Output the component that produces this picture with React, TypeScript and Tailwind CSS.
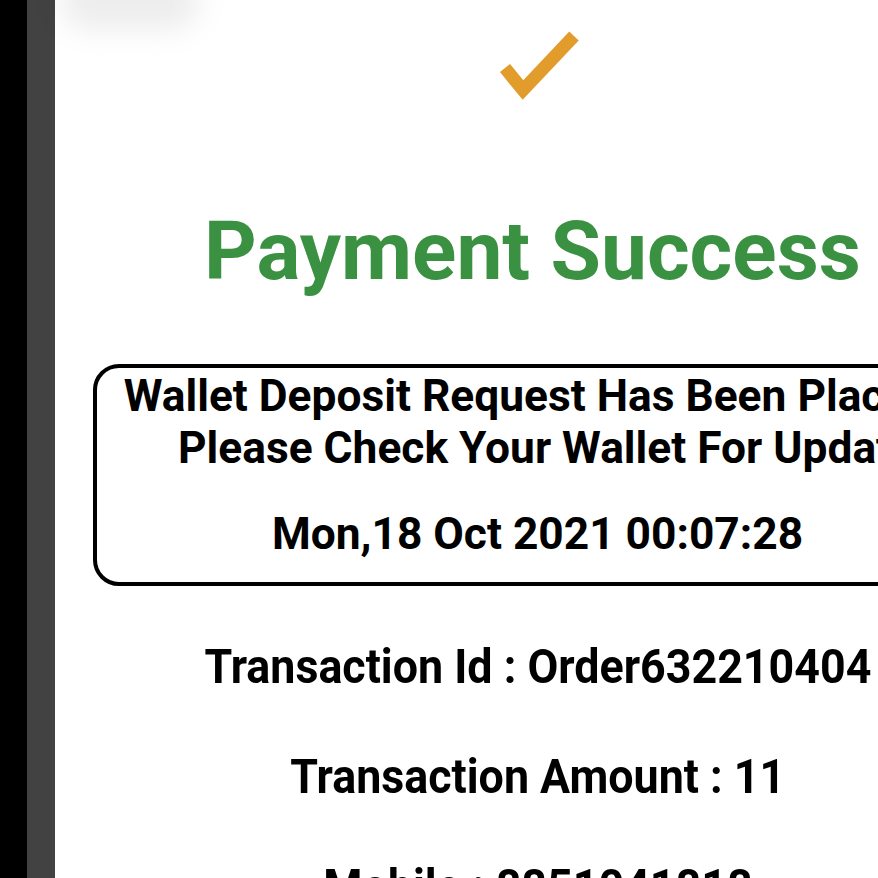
export default function App() {
  return (
    <div className="flex w-[878px] h-[878px] overflow-hidden bg-white" style={{ fontFamily: 'Roboto, "Liberation Sans", sans-serif' }}>
      <div className="w-[27px] shrink-0 bg-black" />
      <div className="w-[28px] shrink-0 bg-[#424242]" />
      <div className="relative w-[965px] shrink-0 flex flex-col items-center">
        <div className="absolute -top-[30px] left-[5px] w-[140px] h-[60px] rounded-full bg-black/[0.07] blur-[14px]" />
        <svg className="mt-[30px] shrink-0" width="90" height="80" viewBox="0 0 90 80">
          <polyline points="12,38 30,60 81,6" fill="none" stroke="#E29C2B" strokeWidth="13" />
        </svg>
        <h1 className="mt-[100px] shrink-0 text-[82px] leading-none font-bold text-[#3A9142] whitespace-nowrap -translate-x-[5px]">Payment Success</h1>
        <div className="mt-[72px] shrink-0 w-[890px] h-[222px] border-4 border-black rounded-[26px] flex flex-col items-center pt-[2px] text-[44.3px] font-bold text-black leading-[52px] text-center whitespace-nowrap">
          <p className="pr-[18px]">Wallet Deposit Request Has Been Placed</p>
          <p className="pl-[18px]">Please Check Your Wallet For Update</p>
          <p className="mt-[34px]">Mon,18 Oct 2021 00:07:28</p>
        </div>
        <div className="mt-[56px] shrink-0 flex flex-col items-center gap-[61px] text-[49px] font-bold text-black leading-[49px]">
          <p className="inline-block scale-x-[0.914] whitespace-nowrap">Transaction Id : Order632210404</p>
          <p className="inline-block scale-x-[0.914] whitespace-nowrap">Transaction Amount : 11</p>
          <p className="inline-block scale-x-[0.914] whitespace-nowrap">Mobile : 8851041818</p>
        </div>
      </div>
    </div>
  );
}
